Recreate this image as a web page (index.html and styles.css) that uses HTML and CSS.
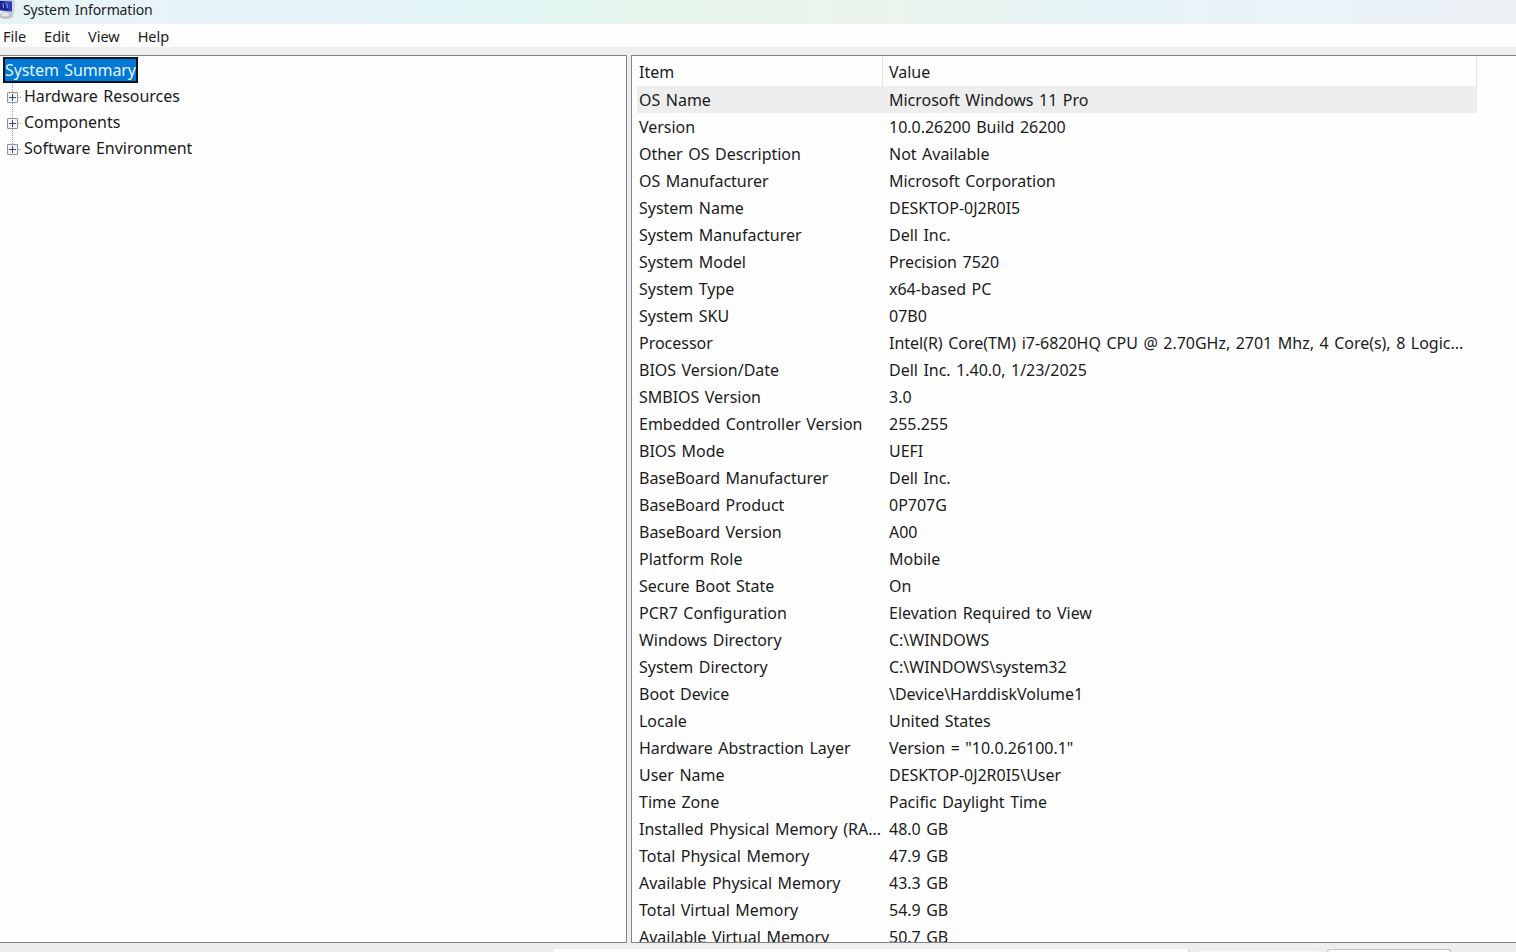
FILE: index.html
```html
<!DOCTYPE html>
<html lang="en">
<head>
    <meta charset="UTF-8">
    <meta name="viewport" content="width=device-width, initial-scale=1.0">
    <title>System Information</title>
    <link rel="stylesheet" href="styles.css">
</head>
<body>
    <header class="title-bar">
        <svg class="app-icon" width="16" height="20" viewBox="0 0 16 20">
            <path d="M0 0 H13 L15 2 L14 14 L10 13 L0 11 Z" fill="#b9bede"/>
            <path d="M0 1 L12 1.500 L12 11.500 L0 10 Z" fill="#2b3fb5"/>
            <path d="M0 1 L4 1 L8 11 L0 10 Z" fill="#17268f"/>
            <path d="M3 3 L3.500 8 M6 3 Q8 5 7 8" stroke="#8fa4f0" stroke-width="1" fill="none"/>
            <path d="M12 1 L15 2 L14 14 L12 12 Z" fill="#d5d6e8"/>
            <ellipse cx="6" cy="15.500" rx="7" ry="3.500" fill="#bfc1ca"/>
            <ellipse cx="5" cy="14.500" rx="4" ry="1.800" fill="#e6e7ee"/>
        </svg>
        <span class="title">System Information</span>
    </header>

    <nav class="menu-bar">
        <span>File</span>
        <span>Edit</span>
        <span>View</span>
        <span>Help</span>
    </nav>

    <main class="panes">
        <section class="tree">
            <div class="tree-root">System Summary</div>
            <div class="tree-item"><i class="expander"></i><span>Hardware Resources</span></div>
            <div class="tree-item"><i class="expander"></i><span>Components</span></div>
            <div class="tree-item"><i class="expander"></i><span>Software Environment</span></div>
        </section>

        <section class="details">
            <div class="row head"><span>Item</span><span>Value</span></div>
            <div class="row selected"><span>OS Name</span><span>Microsoft Windows 11 Pro</span></div>
            <div class="row"><span>Version</span><span>10.0.26200 Build 26200</span></div>
            <div class="row"><span>Other OS Description</span><span>Not Available</span></div>
            <div class="row"><span>OS Manufacturer</span><span>Microsoft Corporation</span></div>
            <div class="row"><span>System Name</span><span>DESKTOP-0J2R0I5</span></div>
            <div class="row"><span>System Manufacturer</span><span>Dell Inc.</span></div>
            <div class="row"><span>System Model</span><span>Precision 7520</span></div>
            <div class="row"><span>System Type</span><span>x64-based PC</span></div>
            <div class="row"><span>System SKU</span><span>07B0</span></div>
            <div class="row"><span>Processor</span><span>Intel(R) Core(TM) i7-6820HQ CPU @ 2.70GHz, 2701 Mhz, 4 Core(s), 8 Logic...</span></div>
            <div class="row"><span>BIOS Version/Date</span><span>Dell Inc. 1.40.0, 1/23/2025</span></div>
            <div class="row"><span>SMBIOS Version</span><span>3.0</span></div>
            <div class="row"><span>Embedded Controller Version</span><span>255.255</span></div>
            <div class="row"><span>BIOS Mode</span><span>UEFI</span></div>
            <div class="row"><span>BaseBoard Manufacturer</span><span>Dell Inc.</span></div>
            <div class="row"><span>BaseBoard Product</span><span>0P707G</span></div>
            <div class="row"><span>BaseBoard Version</span><span>A00</span></div>
            <div class="row"><span>Platform Role</span><span>Mobile</span></div>
            <div class="row"><span>Secure Boot State</span><span>On</span></div>
            <div class="row"><span>PCR7 Configuration</span><span>Elevation Required to View</span></div>
            <div class="row"><span>Windows Directory</span><span>C:\WINDOWS</span></div>
            <div class="row"><span>System Directory</span><span>C:\WINDOWS\system32</span></div>
            <div class="row"><span>Boot Device</span><span>\Device\HarddiskVolume1</span></div>
            <div class="row"><span>Locale</span><span>United States</span></div>
            <div class="row"><span>Hardware Abstraction Layer</span><span>Version = "10.0.26100.1"</span></div>
            <div class="row"><span>User Name</span><span>DESKTOP-0J2R0I5\User</span></div>
            <div class="row"><span>Time Zone</span><span>Pacific Daylight Time</span></div>
            <div class="row"><span>Installed Physical Memory (RA...</span><span>48.0 GB</span></div>
            <div class="row"><span>Total Physical Memory</span><span>47.9 GB</span></div>
            <div class="row"><span>Available Physical Memory</span><span>43.3 GB</span></div>
            <div class="row"><span>Total Virtual Memory</span><span>54.9 GB</span></div>
            <div class="row"><span>Available Virtual Memory</span><span>50.7 GB</span></div>
        </section>
    </main>

    <!-- Top edge of the find bar -->
    <footer class="find-bar">
        <div class="find-input"></div>
        <div class="find-btn disabled"></div>
        <div class="find-btn"></div>
    </footer>
</body>
</html>
```
FILE: styles.css
```css
/* Base styles */
:root {
    --text-color: #1b1b1b;
    --frame-bg: #eeeeee;
    --pane-bg: #fefefe;
    --border-color: #828287;
    --select-color: #0078d4;
}

* {
    box-sizing: border-box;
}

body {
    margin: 0;
    height: 100vh;
    overflow: hidden;
    display: flex;
    flex-direction: column;
    background-color: var(--frame-bg);
    color: var(--text-color);
    font-family: "Noto Sans", "Open Sans", sans-serif;
    font-size: 16px;
    letter-spacing: -0.02px;
    word-spacing: 1.4px;
    white-space: nowrap;
}

/* Title bar */
.title-bar {
    height: 24px;
    flex: none;
    display: flex;
    background: linear-gradient(90deg, #e6f4f7 0%, #e7f3fb 20%, #e2f6f4 34%, #e6f6ec 43%, #ebf4ec 58%, #e6f4f7 73%, #e9f3f8 85%, #ecf1f5 100%);
}

.title {
    margin-left: 7px;
    font-size: 14px;
    line-height: 20px;
    letter-spacing: -0.12px;
}

/* Menu */
.menu-bar {
    height: 23px;
    flex: none;
    display: flex;
    gap: 18px;
    padding-left: 3px;
    background-color: #fefefe;
    font-size: 14.5px;
    line-height: 25px;
}

/* Panes */
.panes {
    height: 896px;
    flex: none;
    display: flex;
    gap: 4px;
    padding-top: 8px;
}

.tree {
    width: 627px;
    padding: 1px 0 0 3px;
    background-color: var(--pane-bg);
    border: 1px solid var(--border-color);
    border-left: none;
}

.tree-root {
    width: 135px;
    height: 26px;
    border: 2px solid #061321;
    background-color: var(--select-color);
    color: #e8f6ff;
    line-height: 22px;
    letter-spacing: -0.1px;
}

.tree-item {
    height: 26px;
    padding-left: 4px;
    display: flex;
    align-items: center;
    line-height: 26px;
    background: repeating-linear-gradient(#999 0 1px, transparent 1px 2px) 9px 0 / 1px 26px no-repeat;
}

.tree-item:last-child {
    background-size: 1px 13px;
}

.expander {
    width: 11px;
    height: 11px;
    margin-top: 2px;
    border: 1px solid #919191;
    border-radius: 1px;
    background:
        linear-gradient(#3b4a70, #3b4a70) center / 7px 1px no-repeat,
        linear-gradient(#3b4a70, #3b4a70) center / 1px 7px no-repeat,
        #f4f4f4;
}

.expander + span::before {
    content: "";
    display: inline-block;
    width: 3px;
    margin-right: 3px;
    border-top: 1px dotted #999;
    vertical-align: 4px;
}

/* Item / Value list */
.details {
    flex: 1;
    padding-left: 5px;
    overflow: hidden;
    background-color: var(--pane-bg);
    border: 1px solid var(--border-color);
    border-right: none;
}

.row {
    width: 840px;
    height: 27px;
    display: grid;
    grid-template-columns: 246px 1fr;
    line-height: 29px;
}

.row span {
    padding-left: 2px;
}

.row span + span {
    padding-left: 6px;
}

.head {
    height: 30px;
    line-height: 32px;
}

.head span {
    border-right: 1px solid #e2e2e2;
}

.selected {
    background-color: #eeeeee;
}

/* Find bar */
.find-bar {
    height: 9px;
    flex: none;
    display: flex;
    padding: 6px 0 0 554px;
}

.find-input {
    width: 635px;
    background-color: #fefefe;
    border-right: 1px solid #d0d0d0;
}

.find-btn {
    width: 124px;
    margin-left: 7px;
    border: 1px solid #c4c4c4;
    border-bottom: none;
    border-radius: 4px 4px 0 0;
    background-color: #fdfdfd;
}

.find-btn.disabled {
    border-color: #e6e6e6;
    background-color: #f4f4f4;
}
```
